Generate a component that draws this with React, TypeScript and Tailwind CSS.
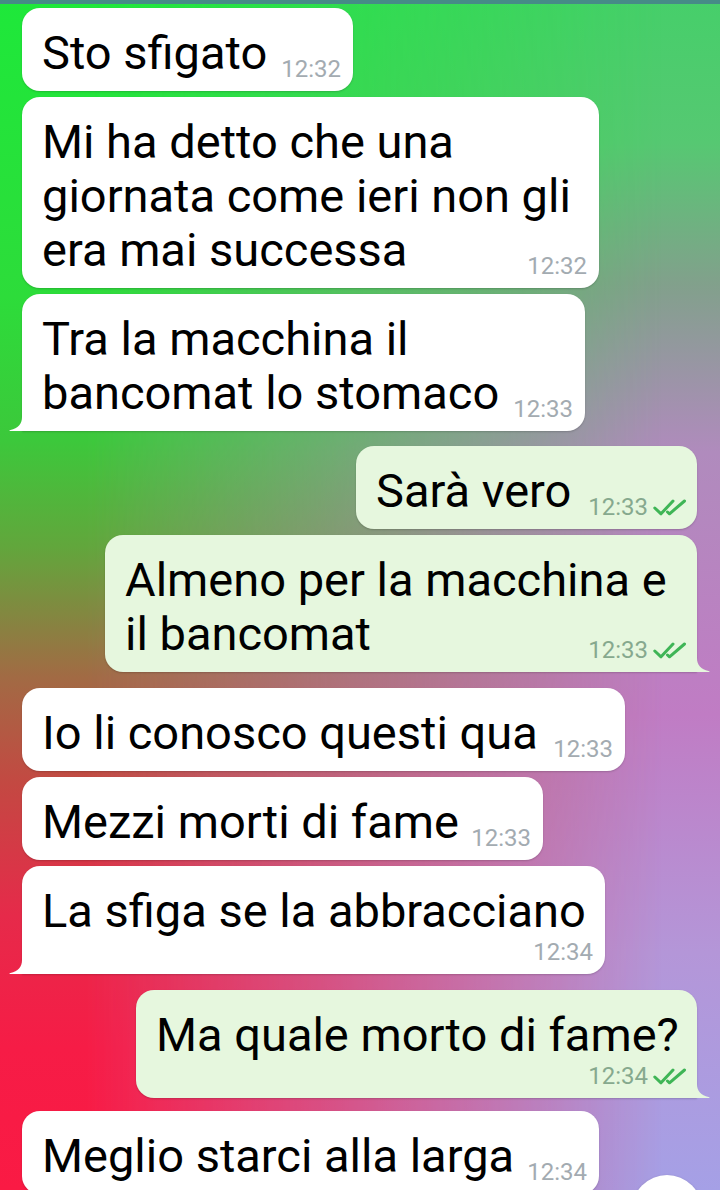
import React from 'react';

type Msg = {
  out: boolean;
  width: string;
  gap: string;
  lines: string[];
  time: string;
  tail?: boolean;
  timeRow?: boolean;
};

const messages: Msg[] = [
  { out: false, width: 'w-[331px]', gap: 'mt-[4px]', lines: ['Sto sfigato'], time: '12:32' },
  { out: false, width: 'w-[577px]', gap: 'mt-[6px]', lines: ['Mi ha detto che una', 'giornata come ieri non gli', 'era mai successa'], time: '12:32' },
  { out: false, width: 'w-[563px]', gap: 'mt-[6px]', lines: ['Tra la macchina il', 'bancomat lo stomaco'], time: '12:33', tail: true },
  { out: true, width: 'w-[341px]', gap: 'mt-[15px]', lines: ['Sarà vero'], time: '12:33' },
  { out: true, width: 'w-[592px]', gap: 'mt-[6px]', lines: ['Almeno per la macchina e', 'il bancomat'], time: '12:33', tail: true },
  { out: false, width: 'w-[603px]', gap: 'mt-[16px]', lines: ['Io li conosco questi qua'], time: '12:33' },
  { out: false, width: 'w-[521px]', gap: 'mt-[6px]', lines: ['Mezzi morti di fame'], time: '12:33' },
  { out: false, width: 'w-[583px]', gap: 'mt-[6px]', lines: ['La sfiga se la abbracciano'], time: '12:34', tail: true, timeRow: true },
  { out: true, width: 'w-[561px]', gap: 'mt-[16px]', lines: ['Ma quale morto di fame?'], time: '12:34', tail: true, timeRow: true },
  { out: false, width: 'w-[577px]', gap: 'mt-[13px]', lines: ['Meglio starci alla larga'], time: '12:34' },
];

const DoubleCheck = () => (
  <svg width="34" height="17" viewBox="0 0 34 17" fill="none" stroke="#3fb556" strokeWidth="3" strokeLinecap="round" strokeLinejoin="round">
    <path d="M1.8 9 L8 14.8 L20 2" />
    <path d="M14.5 13 L16.5 14.8 L31.5 2" />
  </svg>
);

const Tail = ({ out }: { out: boolean }) => (
  <svg
    width="14"
    height="14"
    viewBox="0 0 14 14"
    className={out ? 'absolute -right-[13px] bottom-0 scale-x-[-1]' : 'absolute -left-[13px] bottom-0'}
    fill={out ? '#e6f7de' : '#ffffff'}
  >
    <path d="M13 0 C13 7 9 11.5 1.5 13 C0 13.4 0.2 14 1.5 14 L14 14 L14 0 Z" />
  </svg>
);

const Bubble = ({ m }: { m: Msg }) => (
  <div className={`flex ${m.out ? 'justify-end pr-[23px]' : 'justify-start pl-[22px]'} ${m.gap}`}>
    <div
      className={`relative ${m.width} ${m.out ? 'bg-[#e6f7de]' : 'bg-white'} ${
        m.tail ? (m.out ? 'rounded-[18px] rounded-br-none' : 'rounded-[18px] rounded-bl-none') : 'rounded-[18px]'
      } shadow-[0_1px_2px_rgba(0,0,0,0.18)] pt-[18px] pb-[11px] pl-5 pr-3`}
    >
      <div className="text-[47px] leading-[54px] text-black whitespace-nowrap">
        {m.lines.map((l, i) => (
          <div key={i}>{l}</div>
        ))}
      </div>
      {m.timeRow && <div className="h-[25px]" />}
      <div className={`absolute bottom-[9px] flex items-center gap-[5px] ${m.out ? 'right-[10px]' : 'right-[12px]'}`}>
        <span className={`text-[24px] leading-[26px] ${m.out ? 'text-[#86a98e]' : 'text-[#a3abb1]'}`}>{m.time}</span>
        {m.out && <DoubleCheck />}
      </div>
      {m.tail && <Tail out={m.out} />}
    </div>
  </div>
);

export default function App() {
  return (
    <div className="relative w-[720px] h-[1190px] overflow-hidden [font-family:Roboto,'Noto_Sans',sans-serif] bg-[linear-gradient(to_bottom,#46cf6a_0%,#56c872_12%,#82a08c_24%,#b08bbd_38%,#c07cc4_60%,#b496d8_80%,#a5a0e6_100%)]">
      <div className="absolute inset-0 bg-[linear-gradient(to_bottom,#1ee83a_0%,#2ddc3a_25%,#3cc83b_37%,#62a63c_46%,#a26a44_57%,#c44842_66%,#e62a4a_77%,#f61c46_88%,#fa1a44_100%)] [mask-image:linear-gradient(to_right,black_12%,rgba(0,0,0,0.6)_45%,transparent_92%)]" />
      <div className="relative">
        <div className="h-[4px] bg-[#468b87]" />
        {messages.map((m, i) => (
          <Bubble key={i} m={m} />
        ))}
      </div>
      <div className="absolute left-[632px] top-[1175px] w-[70px] h-[70px] rounded-full bg-white shadow-[0_1px_3px_rgba(0,0,0,0.2)]" />
    </div>
  );
}
